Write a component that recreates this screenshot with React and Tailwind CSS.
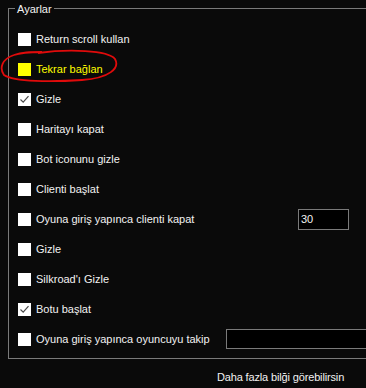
const OPTIONS = [
  { label: 'Return scroll kullan' },
  { label: 'Tekrar bağlan', highlight: true },
  { label: 'Gizle', checked: true },
  { label: 'Haritayı kapat' },
  { label: 'Bot iconunu gizle' },
  { label: 'Clienti başlat' },
  { label: 'Oyuna giriş yapınca clienti kapat', input: 'small', value: '30' },
  { label: 'Gizle' },
  { label: "Silkroad'ı Gizle" },
  { label: 'Botu başlat', checked: true },
  { label: 'Oyuna giriş yapınca oyuncuyu takip', input: 'wide', value: '' },
]

const CheckBox = ({ checked, highlight }) => (
  <span
    className={`w-[13px] h-[13px] shrink-0 flex items-center justify-center ${
      highlight ? 'bg-[#ffff00]' : 'bg-white'
    }`}
  >
    {checked && (
      <svg width="11" height="11" viewBox="0 0 11 11">
        <path d="M1.5 5.5 L4.2 8.2 L9.5 2.2" fill="none" stroke="#4a4a4a" strokeWidth="1.2" />
      </svg>
    )}
  </span>
)

const Row = ({ opt }) => (
  <div className="h-[30px] flex items-center">
    <CheckBox checked={opt.checked} highlight={opt.highlight} />
    <span className={`ml-[5px] whitespace-nowrap ${opt.highlight ? 'text-[#ffff00]' : 'text-[#f2f2f2]'}`}>
      {opt.label}
    </span>
    {opt.input === 'small' && (
      <div className="ml-auto mr-[17px] w-[51px] h-[21px] border border-[#7a7a7a] bg-black pl-[2px] flex items-center text-[#f2f2f2]">
        {opt.value}
      </div>
    )}
    {opt.input === 'wide' && (
      <div className="ml-[16px] grow h-[20px] border border-r-0 border-[#7a7a7a] bg-black" />
    )}
  </div>
)

export default function App() {
  return (
    <div
      className="relative w-[366px] h-[388px] bg-[#0a0a0a] overflow-hidden text-[11px] leading-none"
      style={{ fontFamily: '"Liberation Sans", Arial, sans-serif' }}
    >
      {/* Group box */}
      <div className="relative ml-[8px] mt-[8px] h-[351px] border border-r-0 border-[#7a7a7a] pl-[9px] pt-[15px]">
        <span className="absolute left-[6px] top-[-5px] bg-[#0a0a0a] px-[2px] text-[#f2f2f2]">Ayarlar</span>
        {OPTIONS.map((opt, i) => (
          <Row key={i} opt={opt} />
        ))}
      </div>

      {/* Footer */}
      <div className="mt-[13px] pl-[217px] text-[#f2f2f2] whitespace-nowrap tracking-[-0.15px]">
        Daha fazla bilği görebilirsin
      </div>

      {/* Red hand-drawn highlight */}
      <svg className="absolute left-0 top-[46px]" width="122" height="40" viewBox="0 0 122 40">
        <path
          d="M38 7 C68 3, 108 4, 115 13 C120 22, 110 32, 82 34 C52 36, 14 36, 4 29 C-1 22, 2 13, 14 9 C22 6, 30 6, 42 6"
          fill="none"
          stroke="#e00b0b"
          strokeWidth="1.8"
        />
      </svg>
    </div>
  )
}
